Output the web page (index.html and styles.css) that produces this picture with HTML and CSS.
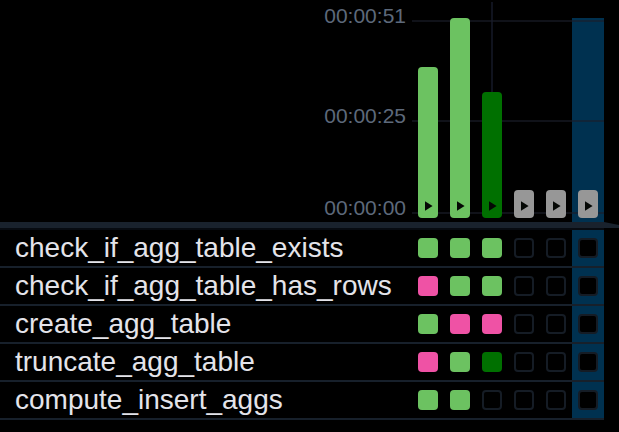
FILE: index.html
```
<!DOCTYPE html>
<html lang="en">
<head>
<meta charset="utf-8">
<title>Task runs</title>
<link rel="stylesheet" href="styles.css">
</head>
<body>
<main class="grid-view">
  <section class="chart" aria-label="Run durations">
    <div class="axis">
      <div class="tick"><span class="tick-label">00:00:51</span><span class="tick-line"></span></div>
      <div class="tick"><span class="tick-label">00:00:25</span><span class="tick-line"></span></div>
      <div class="tick"><span class="tick-label">00:00:00</span><span class="tick-line"></span></div>
    </div>
    <div class="runs" id="runs"></div>
  </section>
  <div class="divider"></div>
  <table class="tasks">
    <tbody id="tasks"></tbody>
  </table>
</main>
<script src="script.js"></script>
</body>
</html>
```
FILE: styles.css
```
* {
  box-sizing: border-box;
}

body {
  margin: 0;
  background: #000;
  color: #e4e4ea;
  font-family: "Liberation Sans", Arial, sans-serif;
}

button {
  display: block;
  margin: 0;
  padding: 0;
  border: 0;
  font: inherit;
  cursor: pointer;
}

.chart {
  display: grid;
  padding-right: 15px;
}

.axis,
.runs {
  grid-area: 1 / 1;
}

/* Grid lines run over the selected column and under the bars. */
.axis {
  display: grid;
  grid-template-rows: 100px 92px 30px;
  z-index: 1;
  pointer-events: none;
}

.tick {
  display: grid;
  grid-template-columns: 1fr 192px;
  column-gap: 6px;
}

.tick-label {
  color: #5d697b;
  font-size: 21px;
  line-height: 32px;
  text-align: right;
}

.tick-line {
  height: 2px;
  margin-top: 20px;
  background: rgba(27, 30, 42, 0.6);
}

.runs {
  display: flex;
  justify-content: flex-end;
}

.run {
  display: flex;
  flex-direction: column;
  align-items: center;
  justify-content: flex-end;
  width: 32px;
  margin-top: 18px;
  padding-bottom: 4px;
}

.run.selected {
  background: #003150;
}

.run.marked {
  margin-top: 2px;
}

.run.marked::before {
  content: "";
  flex: 1;
  width: 2px;
  background: #10131e;
}

.bar {
  display: flex;
  align-items: flex-end;
  justify-content: center;
  width: 20px;
  padding-bottom: 7px;
  border-radius: 4px;
  z-index: 2;
}

.play {
  display: block;
  width: 8px;
  height: 10px;
  margin-left: 2px;
  fill: #050805;
}

.success {
  background: #6cc261;
}

.running {
  background: #007000;
}

.queued {
  background: #979797;
}

.failed {
  background: #ef52a5;
}

.none {
  border: 2px solid #151c25;
  background: #000;
}

.divider {
  height: 6px;
  background: #19222d;
  clip-path: polygon(0 0, calc(100% - 15px) 0, 100% 50%, 100% 100%, 0 100%);
}

.tasks {
  width: calc(100% - 15px);
  border-collapse: separate;
  border-spacing: 0;
  border-top: 2px solid #070b11;
}

.tasks th,
.tasks td {
  height: 38px;
  padding: 0;
  border-bottom: 2px solid #17202b;
}

.tasks th {
  padding-left: 15px;
  font-size: 28px;
  font-weight: 400;
  line-height: 36px;
  text-align: left;
}

.tasks td {
  width: 32px;
}

.tasks td.selected {
  background: #003150;
}

.state {
  width: 20px;
  height: 20px;
  margin: 0 auto;
  border-radius: 4px;
}
```
FILE: script.js
```
const runs = [
  { state: "success", height: 151 },
  { state: "success", height: 200 },
  { state: "running", height: 126, marked: true },
  { state: "queued", height: 28 },
  { state: "queued", height: 28 },
  { state: "queued", height: 28, selected: true }
];

const tasks = [
  ["check_if_agg_table_exists", "success", "success", "success", "none", "none", "none"],
  ["check_if_agg_table_has_rows", "failed", "success", "success", "none", "none", "none"],
  ["create_agg_table", "success", "failed", "failed", "none", "none", "none"],
  ["truncate_agg_table", "failed", "success", "running", "none", "none", "none"],
  ["compute_insert_aggs", "success", "success", "none", "none", "none", "none"]
];

document.getElementById("runs").innerHTML = runs.map((run, i) => `
  <div class="run${run.marked ? " marked" : ""}${run.selected ? " selected" : ""}">
    <button class="bar ${run.state}" style="height:${run.height}px" aria-label="Run ${i + 1}: ${run.state}">
      <svg class="play" viewBox="0 0 8 10" aria-hidden="true"><path d="M0 0.3 L7.6 5 L0 9.7 Z"/></svg>
    </button>
  </div>`).join("");

document.getElementById("tasks").innerHTML = tasks.map(([name, ...states]) => `
  <tr>
    <th scope="row">${name}</th>
    ${states.map((state, i) => `<td${runs[i].selected ? ' class="selected"' : ""}><button class="state ${state}" aria-label="${name}, run ${i + 1}: ${state}"></button></td>`).join("")}
  </tr>`).join("");
```
